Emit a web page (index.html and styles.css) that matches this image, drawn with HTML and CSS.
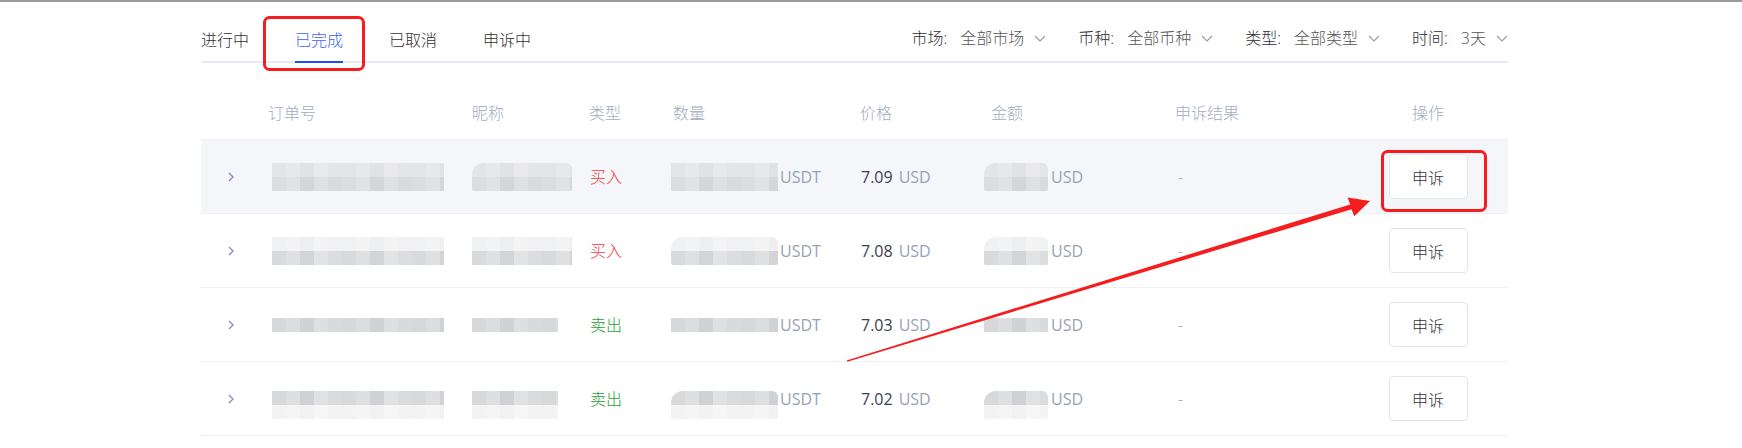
FILE: index.html
```html
<!DOCTYPE html>
<html lang="zh-CN">
<head>
<meta charset="utf-8">
<title>订单</title>
<link rel="stylesheet" href="styles.css">
</head>
<body>
<div class="topbar"></div>
<div class="page">
  <div class="toolbar">
    <div class="tabs">
      <span class="tab">进行中</span>
      <span class="tab active">已完成</span>
      <span class="tab">已取消</span>
      <span class="tab">申诉中</span>
    </div>
    <div class="filters">
      <div class="filter"><span class="f-label">市场:</span><span class="f-value">全部市场</span><svg class="caret" viewBox="0 0 12 7"><polyline points="1,1 6,6 11,1"/></svg></div>
      <div class="filter"><span class="f-label">币种:</span><span class="f-value">全部币种</span><svg class="caret" viewBox="0 0 12 7"><polyline points="1,1 6,6 11,1"/></svg></div>
      <div class="filter"><span class="f-label">类型:</span><span class="f-value">全部类型</span><svg class="caret" viewBox="0 0 12 7"><polyline points="1,1 6,6 11,1"/></svg></div>
      <div class="filter"><span class="f-label">时间:</span><span class="f-value">3天</span><svg class="caret" viewBox="0 0 12 7"><polyline points="1,1 6,6 11,1"/></svg></div>
    </div>
  </div>

  <div class="table">
    <div class="row head">
      <span></span>
      <span>订单号</span>
      <span>昵称</span>
      <span>类型</span>
      <span class="h-qty">数量</span>
      <span class="h-price">价格</span>
      <span class="h-amt">金额</span>
      <span>申诉结果</span>
      <span class="h-op">操作</span>
      <span></span>
    </div>

    <div class="row body hl">
      <span class="exp"><svg viewBox="0 0 6 10"><polyline points="1,1 5,5 1,9"/></svg></span>
      <span class="c-order"><i class="px pa w-order"></i></span>
      <span><i class="px pa w-nick round"></i></span>
      <span class="buy">买入</span>
      <span class="c-qty"><i class="px pa w-qty"></i><span class="unit">USDT</span></span>
      <span class="c-price">7.09<span class="unit sp">USD</span></span>
      <span class="c-amt"><i class="px pa w-amt round"></i><span class="unit">USD</span></span>
      <span class="dash">-</span>
      <span class="c-op"><button class="btn">申诉</button></span>
      <span></span>
    </div>

    <div class="row body">
      <span class="exp"><svg viewBox="0 0 6 10"><polyline points="1,1 5,5 1,9"/></svg></span>
      <span class="c-order"><i class="px pb w-order"></i></span>
      <span><i class="px pb w-nick"></i></span>
      <span class="buy">买入</span>
      <span class="c-qty"><i class="px pb w-qty round"></i><span class="unit">USDT</span></span>
      <span class="c-price">7.08<span class="unit sp">USD</span></span>
      <span class="c-amt"><i class="px pb w-amt round"></i><span class="unit">USD</span></span>
      <span class="dash">-</span>
      <span class="c-op"><button class="btn">申诉</button></span>
      <span></span>
    </div>

    <div class="row body">
      <span class="exp"><svg viewBox="0 0 6 10"><polyline points="1,1 5,5 1,9"/></svg></span>
      <span class="c-order"><i class="px pc w-order"></i></span>
      <span><i class="px pc w-nick2"></i></span>
      <span class="sell">卖出</span>
      <span class="c-qty"><i class="px pc w-qty"></i><span class="unit">USDT</span></span>
      <span class="c-price">7.03<span class="unit sp">USD</span></span>
      <span class="c-amt"><i class="px pc w-amt"></i><span class="unit">USD</span></span>
      <span class="dash">-</span>
      <span class="c-op"><button class="btn">申诉</button></span>
      <span></span>
    </div>

    <div class="row body">
      <span class="exp"><svg viewBox="0 0 6 10"><polyline points="1,1 5,5 1,9"/></svg></span>
      <span class="c-order"><i class="px pd w-order"></i></span>
      <span><i class="px pd w-nick2"></i></span>
      <span class="sell">卖出</span>
      <span class="c-qty"><i class="px pd w-qty round"></i><span class="unit">USDT</span></span>
      <span class="c-price">7.02<span class="unit sp">USD</span></span>
      <span class="c-amt"><i class="px pd w-amt round"></i><span class="unit">USD</span></span>
      <span class="dash">-</span>
      <span class="c-op"><button class="btn">申诉</button></span>
      <span></span>
    </div>
  </div>
</div>

<svg class="annot" viewBox="0 0 1742 448" width="1742" height="448">
  <rect x="264.5" y="17.5" width="99" height="52" rx="5" ry="5" class="mark"/>
  <rect x="1382.5" y="151.5" width="103" height="59" rx="5" ry="5" class="mark"/>
  <polygon class="arrow" points="846.6,360.4 1350.2,204.5 1347.6,197.6 1370,201 1354.2,216.2 1351.6,209.2 847.4,361.8"/>
</svg>
</body>
</html>
```

FILE: styles.css
```css
* { box-sizing: border-box; }
html, body { margin: 0; padding: 0; background: #ffffff; }
body {
  font-family: "Open Sans", "Noto Sans CJK SC", sans-serif;
  font-size: 16px;
  font-weight: 300;
  color: #333333;
  width: 1742px;
  height: 448px;
  overflow: hidden;
}

.topbar { height: 2px; background: #9a9a9a; }

.page { margin-left: 201px; width: 1307px; }

/* toolbar */
.toolbar {
  display: flex;
  justify-content: space-between;
  align-items: flex-end;
  border-bottom: 2px solid #e4e9f3;
  height: 61px;
}
.tabs { display: flex; gap: 46px; }
.tab {
  line-height: 24px;
  color: #2f2f2f;
  border-bottom: 2px solid transparent;
  margin-bottom: -2px;
  padding-bottom: 9px;
}
.tab.active { color: #3c60f3; border-bottom-color: #1d4ef6; }

.filters { display: flex; gap: 32px; padding-bottom: 11px; }
.filter { display: flex; align-items: center; line-height: 24px; }
.f-label { color: #2f2f2f; }
.f-value { color: #555555; margin-left: 13px; }
.caret { width: 12px; height: 7px; margin-left: 10px; fill: none; stroke: #9a9a9a; stroke-width: 1.1; }

/* table */
.row {
  display: grid;
  grid-template-columns: 67px 204px 117px 82px 188px 125px 191px 213px 80px 40px;
  align-items: center;
}
.row.head {
  height: 77px;
  padding-top: 38px;
  padding-bottom: 14px;
  line-height: 24px;
  color: #a3abbd;
  border-bottom: 1px solid #eceff4;
}
.h-qty { padding-left: 2px; }
.h-price { padding-left: 1px; }
.h-amt { padding-left: 7px; }
.h-op { text-align: center; }

.row.body {
  height: 74px;
  border-bottom: 1px solid #edf0f5;
  line-height: 24px;
}
.row.hl { background: #f4f6fa; }

.exp { display: flex; padding-left: 27px; }
.exp svg { width: 6px; height: 10px; fill: none; stroke: #7d8db3; stroke-width: 1.3; }

.c-order { padding-left: 4px; display: flex; }
.buy { color: #f03a3a; padding-left: 1px; }
.sell { color: #239f33; padding-left: 1px; }

.c-qty, .c-amt { display: flex; align-items: center; }
.c-price { padding-left: 2px; color: #3b4150; font-weight: 400; }
.unit { color: #97a2b7; font-weight: 400; }
.c-qty .unit { margin-left: 2px; }
.c-amt .unit { margin-left: 3px; }
.sp { margin-left: 6px; }
.dash { color: #97a2b7; padding-left: 3px; }

.c-op { display: flex; justify-content: center; }
.btn {
  width: 79px;
  height: 45px;
  border: 1px solid #e1e4ea;
  border-radius: 4px;
  background: #ffffff;
  font-family: "Noto Sans CJK SC", sans-serif;
  font-size: 16px;
  font-weight: 300;
  color: #333333;
  padding: 0;
}

/* pixelated (mosaic) blocks */
.px {
  display: block;
  height: 28px;
  background-repeat: no-repeat;
  background-size: 100% 14px;
  background-position: 0 0, 0 14px;
}
.round { border-radius: 12px 6px 2px 2px; }
.w-order { width: 172px; }
.w-nick { width: 100px; }
.w-nick2 { width: 86px; }
.w-qty { width: 107px; }
.w-amt { width: 64px; }

.pa {
  background-image:
    repeating-linear-gradient(90deg, #e3e4e7 0 14px, #e7e8eb 14px 28px, #e1e2e5 28px 42px, #e9e9ec 42px 56px, #e4e5e8 56px 70px),
    repeating-linear-gradient(90deg, #dcdde0 0 14px, #e1e2e4 14px 28px, #d5d6d9 28px 42px, #dfe0e3 42px 56px, #d9dadd 56px 70px);
}
.pb {
  background-image:
    repeating-linear-gradient(90deg, #f0f1f2 0 14px, #f3f3f4 14px 28px, #eeeff1 28px 42px, #f4f4f5 42px 56px, #f1f1f3 56px 70px),
    repeating-linear-gradient(90deg, #d9dadc 0 14px, #dfe0e2 14px 28px, #d3d4d7 28px 42px, #e2e3e5 42px 56px, #dcdddf 56px 70px);
}
.pc {
  height: 14px;
  background-size: 100% 14px;
  background-image:
    repeating-linear-gradient(90deg, #d7d8da 0 14px, #dcdddf 14px 28px, #d1d2d5 28px 42px, #dedfe1 42px 56px, #d9dadd 56px 70px);
}
.pd {
  transform: translateY(6px);
  background-image:
    repeating-linear-gradient(90deg, #d8d9db 0 14px, #dedfe1 14px 28px, #d0d1d4 28px 42px, #e0e1e3 42px 56px, #dadbdd 56px 70px),
    repeating-linear-gradient(90deg, #f3f3f4 0 14px, #f5f5f6 14px 28px, #f2f2f3 28px 42px, #f6f6f7 42px 56px, #f4f4f5 56px 70px);
}

/* annotation overlay */
.annot {
  position: absolute;
  left: 0;
  top: 0;
  pointer-events: none;
}
.mark { fill: none; stroke: #f51d1d; stroke-width: 3; }
.arrow { fill: #f51d1d; }
```
